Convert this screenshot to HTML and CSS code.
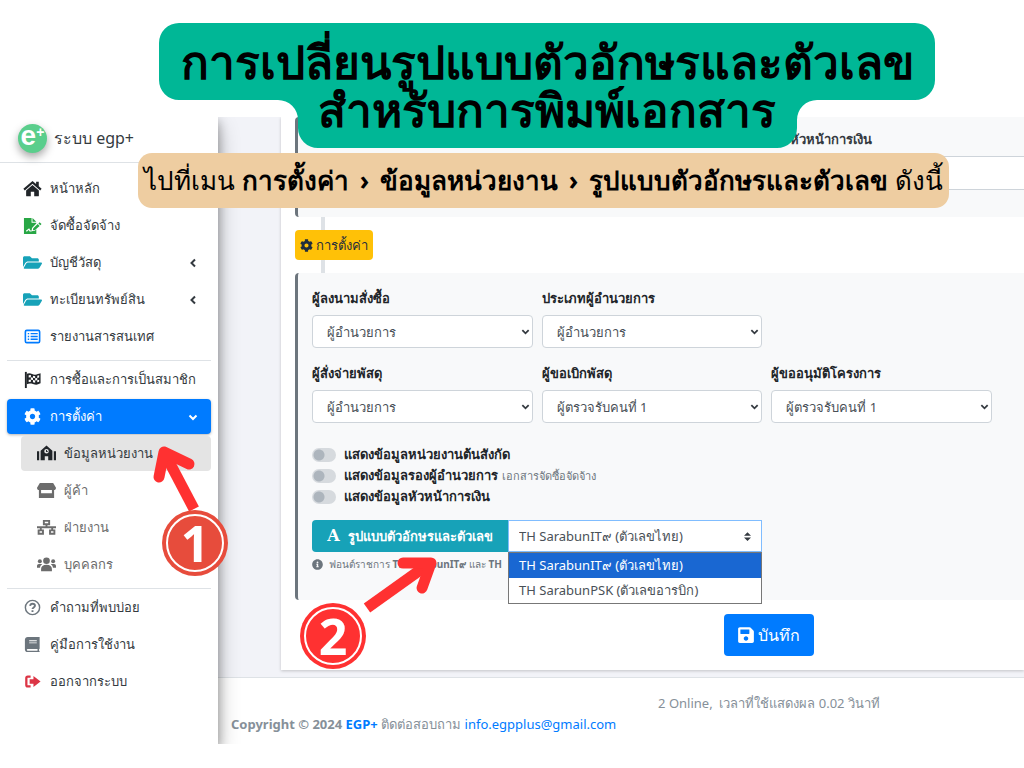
FILE: index.html
```html
<!DOCTYPE html>
<html lang="th">
<head>
  <meta charset="UTF-8" />
  <meta name="viewport" content="width=device-width, initial-scale=1" />
  <title>การเปลี่ยนรูปแบบตัวอักษรและตัวเลข</title>
  <link rel="stylesheet" href="styles.css">
</head>
<body>
  <div class="app">
    <aside class="sidebar">
      <a href="#" class="brand">
        <span class="logo">e<sup>+</sup></span>
        ระบบ egp+
      </a>

      <nav class="menu">
        <a href="#" class="item">
          <svg class="icon dark" viewBox="0 0 20 20"><path d="M10 2 0.400 10.300l1.500 1.700L10 5l8.100 7 1.500-1.700-3-2.600V3h-2.800v2.300z"/><path d="M10 6.400 3.300 12.200v5.300c0 .4.300.7.700.7h4.200v-4.900h3.600v4.900H16c.4 0 .7-.3.700-.7v-5.300z"/></svg>
          <span>หน้าหลัก</span>
        </a>
        <a href="#" class="item">
          <svg class="icon green" viewBox="0 0 20 20"><path fill-rule="evenodd" d="M1 2h8v5h5v1l-4.500 4.500-.5 3.500 3.500-.5L14 14v5H1zM3 15.500l1 1 2-1.800 1 1.500h2v-1H7.800L6.500 13z"/><path d="M10 2l4 4h-4zM17.500 6.500l2 2-1.300 1.300-2-2zM15.500 8.500l2 2-4.800 4.300-2.200.2.300-2z"/></svg>
          <span>จัดซื้อจัดจ้าง</span>
        </a>
        <a href="#" class="item">
          <svg class="icon teal" viewBox="0 0 576 512"><path d="M572.694 292.093L500.270 416.248A63.997 63.997 0 0 1 444.989 448H45.025c-18.523 0-30.064-20.093-20.731-36.093l72.424-124.155A64 64 0 0 1 152 256h399.964c18.523 0 30.064 20.093 20.730 36.093zM152 224h328v-48c0-26.510-21.490-48-48-48H272l-64-64H48C21.490 64 0 85.490 0 112v278.046l69.077-118.418C86.214 242.250 117.989 224 152 224z"/></svg>
          <span>บัญชีวัสดุ</span>
          <svg class="caret" viewBox="0 0 10 10"><path d="M7 1.500 3.500 5 7 8.500"/></svg>
        </a>
        <a href="#" class="item">
          <svg class="icon teal" viewBox="0 0 576 512"><path d="M572.694 292.093L500.270 416.248A63.997 63.997 0 0 1 444.989 448H45.025c-18.523 0-30.064-20.093-20.731-36.093l72.424-124.155A64 64 0 0 1 152 256h399.964c18.523 0 30.064 20.093 20.730 36.093zM152 224h328v-48c0-26.510-21.490-48-48-48H272l-64-64H48C21.490 64 0 85.490 0 112v278.046l69.077-118.418C86.214 242.250 117.989 224 152 224z"/></svg>
          <span>ทะเบียนทรัพย์สิน</span>
          <svg class="caret" viewBox="0 0 10 10"><path d="M7 1.500 3.500 5 7 8.500"/></svg>
        </a>
        <a href="#" class="item">
          <svg class="icon blue" viewBox="0 0 20 20"><rect x="2.500" y="3.500" width="15" height="13" rx="1.500" fill="none" stroke="currentColor" stroke-width="1.700"/><path d="M5 6.200h1.500v1.500H5zM8 6.200h7.500v1.500H8zM5 9.200h1.500v1.500H5zM8 9.200h7.500v1.500H8zM5 12.200h1.500v1.500H5zM8 12.200h7.500v1.500H8z"/></svg>
          <span>รายงานสารสนเทศ</span>
        </a>

        <hr>

        <a href="#" class="item">
          <svg class="icon dark" viewBox="0 0 20 20"><path d="M2 2h2v17H2z"/><path fill-rule="evenodd" d="M4 4c4-2 6 1.500 9 1 2-.3 3-1 5.500-1.500V14c-4 2-5 1.500-8 .7C8 14 6 14 4 15zM6 5.500v2.300l2.300-.3V5.300zM10.500 6v2.200l2.300.4V6.500zM15 6v2.300l2-.5V5.500zM8.300 7.700v2.500l2.200.3V8.200zM12.800 8.600V11l2.200-.3V8.300zM6 10.300v2.400l2.300-.4v-2.100zM10.500 10.500v2.300l2.300.5V11zM15 10.700V13l2-.6v-2.200z"/></svg>
          <span>การซื้อและการเป็นสมาชิก</span>
        </a>
        <a href="#" class="item active">
          <svg class="icon" viewBox="0 0 512 512"><path d="M487.400 315.700l-42.600-24.600c4.300-23.200 4.300-47 0-70.200l42.600-24.600c4.900-2.800 7.100-8.600 5.500-14-11.100-35.600-30-67.800-54.700-94.600-3.800-4.100-10-5.100-14.800-2.300L380.800 110c-17.900-15.400-38.500-27.300-60.800-35.100V25.800c0-5.600-3.900-10.500-9.400-11.700-36.700-8.200-74.300-7.800-109.200 0-5.500 1.200-9.400 6.100-9.400 11.700V75c-22.200 7.900-42.800 19.800-60.800 35.100L88.700 85.500c-4.900-2.800-11-1.900-14.800 2.300-24.700 26.700-43.600 58.900-54.700 94.600-1.700 5.400.6 11.200 5.500 14L67.300 221c-4.300 23.200-4.300 47 0 70.200l-42.600 24.600c-4.900 2.800-7.100 8.600-5.500 14 11.100 35.600 30 67.800 54.700 94.600 3.800 4.100 10 5.100 14.800 2.300l42.600-24.600c17.900 15.400 38.500 27.300 60.800 35.100v49.200c0 5.600 3.900 10.500 9.400 11.700 36.700 8.200 74.300 7.800 109.200 0 5.500-1.200 9.400-6.100 9.400-11.700v-49.200c22.200-7.900 42.800-19.800 60.800-35.100l42.600 24.600c4.900 2.800 11 1.900 14.800-2.300 24.700-26.700 43.600-58.900 54.700-94.600 1.500-5.500-.7-11.300-5.600-14.100zM256 336c-44.100 0-80-35.900-80-80s35.900-80 80-80 80 35.900 80 80-35.900 80-80 80z"/></svg>
          <span>การตั้งค่า</span>
          <svg class="caret" viewBox="0 0 10 10"><path d="M1.500 3.500 5 7l3.500-3.500"/></svg>
        </a>
        <div class="submenu">
          <a href="#" class="item current">
            <svg class="icon dark" viewBox="0 0 20 20"><path d="M0 7.500h2.300V17H0zM17.700 7.500H20V17h-2.300z"/><path fill-rule="evenodd" d="M3.800 17V7L10 1.500 16.200 7v10h-4.400v-4H8.200v4zM10 5.300a2.400 2.400 0 1 0 0 4.800 2.400 2.400 0 0 0 0-4.800zM9.500 6.200h1v1.300h1v1h-2z"/></svg>
            <span>ข้อมูลหน่วยงาน</span>
          </a>
          <a href="#" class="item">
            <svg class="icon" viewBox="0 0 20 20"><path fill-rule="evenodd" d="M3 2h14l3 5c0 1.500-1 2.500-2 2.500V18H2V9.500C1 9.500 0 8.500 0 7zM4.300 9.500V13h11.400V9.500z"/></svg>
            <span>ผู้ค้า</span>
          </a>
          <a href="#" class="item">
            <svg class="icon" viewBox="0 0 20 20"><g fill="none" stroke="currentColor" stroke-width="2"><path d="M7.200 3h5.600v3.500H7.200zM1.700 13h4.600v3.500H1.700zM13.700 13h4.600v3.500h-4.600zM10 6.500v3.300M4 13V9.800M16 13V9.800M0 9.800h20"/></g></svg>
            <span>ฝ่ายงาน</span>
          </a>
          <a href="#" class="item">
            <svg class="icon" viewBox="0 0 20 20"><circle cx="10" cy="6" r="3.500"/><circle cx="3" cy="6.500" r="2.100"/><circle cx="17" cy="6.500" r="2.100"/><path d="M4.300 17v-2.300c0-2.500 2-4.400 5.700-4.400s5.700 1.900 5.700 4.400V17zM0 13.300v-1.700c0-1.300.9-2.100 2-2.100h2.300c.5 0 .8.200 1 .4-1.300.7-2 1.900-2.100 3.400zM20 13.300v-1.700c0-1.300-.9-2.100-2-2.100h-2.300c-.5 0-.8.200-1 .4 1.300.7 2 1.900 2.100 3.400z"/></svg>
            <span>บุคคลกร</span>
          </a>
        </div>

        <hr>

        <a href="#" class="item">
          <svg class="icon gray" viewBox="0 0 20 20"><g fill="none" stroke="currentColor"><circle cx="10" cy="10" r="7.500" stroke-width="1.500"/><path stroke-width="2" d="M7.500 8.200c.2-1.500 1.100-2.200 2.500-2.200 1.500 0 2.600.9 2.600 2.200 0 1.700-2.600 1.800-2.600 3.500M10 12.800v2"/></g></svg>
          <span>คำถามที่พบบ่อย</span>
        </a>
        <a href="#" class="item">
          <svg class="icon gray" viewBox="0 0 20 20"><path fill-rule="evenodd" d="M5 2h12.500v12.500l-.6.5v1.500l.6.500v1H5c-1.700 0-3-1.200-3-2.800V5c0-1.700 1.300-3 3-3zM6.500 5.500v1h8v-1zM6.500 7.800v1h8v-1zM5 14.800c-1.300 0-1.300 1.800 0 1.800h10.300v-1.800z"/></svg>
          <span>คู่มือการใช้งาน</span>
        </a>
        <a href="#" class="item">
          <svg class="icon red" viewBox="0 0 20 20"><path d="M8 4.800H5A1.500 1.500 0 0 0 3.500 6.300v7.400A1.500 1.500 0 0 0 5 15.200h3" fill="none" stroke="currentColor" stroke-width="2.400"/><path d="M7 7.700h4V4.300l7.500 5.700-7.500 5.700v-3.400H7z"/></svg>
          <span>ออกจากระบบ</span>
        </a>
      </nav>
    </aside>

    <div class="main">
      <div class="content">
        <form class="card">
          <section class="panel panel-top">
            <label for="finance">หัวหน้าการเงิน</label>
            <input type="text" id="finance" name="finance">
          </section>

          <div class="step">
            <button type="button" class="step-btn">
              <svg viewBox="0 0 512 512"><path d="M487.400 315.700l-42.600-24.600c4.300-23.200 4.300-47 0-70.200l42.600-24.600c4.900-2.800 7.100-8.600 5.500-14-11.100-35.600-30-67.800-54.700-94.600-3.800-4.100-10-5.100-14.800-2.300L380.800 110c-17.900-15.400-38.500-27.300-60.800-35.100V25.800c0-5.600-3.900-10.500-9.400-11.700-36.700-8.200-74.300-7.800-109.200 0-5.500 1.200-9.400 6.100-9.400 11.700V75c-22.200 7.900-42.800 19.800-60.800 35.100L88.700 85.500c-4.900-2.800-11-1.900-14.800 2.300-24.700 26.700-43.600 58.900-54.700 94.600-1.700 5.400.6 11.200 5.500 14L67.300 221c-4.300 23.200-4.300 47 0 70.200l-42.600 24.600c-4.900 2.800-7.100 8.600-5.500 14 11.100 35.600 30 67.800 54.700 94.600 3.800 4.100 10 5.100 14.800 2.300l42.600-24.600c17.900 15.400 38.500 27.300 60.800 35.100v49.200c0 5.600 3.900 10.500 9.400 11.700 36.700 8.200 74.300 7.800 109.200 0 5.500-1.200 9.400-6.100 9.400-11.700v-49.200c22.200-7.900 42.800-19.800 60.800-35.100l42.600 24.600c4.900 2.800 11 1.900 14.800-2.300 24.700-26.700 43.600-58.900 54.700-94.600 1.500-5.500-.7-11.300-5.600-14.100zM256 336c-44.100 0-80-35.900-80-80s35.900-80 80-80 80 35.900 80 80-35.900 80-80 80z"/></svg>
              <span>การตั้งค่า</span>
            </button>
          </div>

          <section class="panel">
            <div class="fields">
              <div class="field">
                <label for="signer">ผู้ลงนามสั่งซื้อ</label>
                <div class="select">
                  <select id="signer"><option>ผู้อำนวยการ</option></select>
                  <svg viewBox="0 0 10 10"><path d="M1.500 3.500 5 7l3.500-3.500"/></svg>
                </div>
              </div>
              <div class="field">
                <label for="type">ประเภทผู้อำนวยการ</label>
                <div class="select">
                  <select id="type"><option>ผู้อำนวยการ</option></select>
                  <svg viewBox="0 0 10 10"><path d="M1.500 3.500 5 7l3.500-3.500"/></svg>
                </div>
              </div>
              <div class="field first">
                <label for="payer">ผู้สั่งจ่ายพัสดุ</label>
                <div class="select">
                  <select id="payer"><option>ผู้อำนวยการ</option></select>
                  <svg viewBox="0 0 10 10"><path d="M1.500 3.500 5 7l3.500-3.500"/></svg>
                </div>
              </div>
              <div class="field">
                <label for="requester">ผู้ขอเบิกพัสดุ</label>
                <div class="select">
                  <select id="requester"><option>ผู้ตรวจรับคนที่ 1</option></select>
                  <svg viewBox="0 0 10 10"><path d="M1.500 3.500 5 7l3.500-3.500"/></svg>
                </div>
              </div>
              <div class="field">
                <label for="approver">ผู้ขออนุมัติโครงการ</label>
                <div class="select">
                  <select id="approver"><option>ผู้ตรวจรับคนที่ 1</option></select>
                  <svg viewBox="0 0 10 10"><path d="M1.500 3.500 5 7l3.500-3.500"/></svg>
                </div>
              </div>
            </div>

            <div class="switches">
              <label><input type="checkbox"> แสดงข้อมูลหน่วยงานต้นสังกัด</label>
              <label><input type="checkbox"> แสดงข้อมูลรองผู้อำนวยการ <small>เอกสารจัดซื้อจัดจ้าง</small></label>
              <label><input type="checkbox"> แสดงข้อมูลหัวหน้าการเงิน</label>
            </div>

            <div class="font-group">
              <label for="font"><span class="font-icon">A</span> รูปแบบตัวอักษรและตัวเลข</label>
              <div class="font-select">
                <select id="font">
                  <option>TH SarabunIT๙ (ตัวเลขไทย)</option>
                  <option>TH SarabunPSK (ตัวเลขอารบิก)</option>
                </select>
                <svg viewBox="0 0 8 10"><path d="M4 0l4 4H0zM4 10l4-4H0z"/></svg>
                <ul class="options">
                  <li class="selected">TH SarabunIT๙ (ตัวเลขไทย)</li>
                  <li>TH SarabunPSK (ตัวเลขอารบิก)</li>
                </ul>
              </div>
            </div>
            <p class="hint">
              <svg viewBox="0 0 512 512"><path d="M256 8C119.043 8 8 119.083 8 256c0 136.997 111.043 248 248 248s248-111.003 248-248C504 119.083 392.957 8 256 8zm0 110c23.196 0 42 18.804 42 42s-18.804 42-42 42-42-18.804-42-42 18.804-42 42-42zm56 254c0 6.627-5.373 12-12 12h-88c-6.627 0-12-5.373-12-12v-24c0-6.627 5.373-12 12-12h12v-64h-12c-6.627 0-12-5.373-12-12v-24c0-6.627 5.373-12 12-12h64c6.627 0 12 5.373 12 12v100h12c6.627 0 12 5.373 12 12v24z"/></svg>
              <span>ฟอนต์ราชการ <b>TH SarabunIT๙</b> และ <b>TH</b></span>
            </p>
          </section>

          <div class="actions">
            <button type="submit" class="save">
              <svg viewBox="0 0 448 512"><path d="M433.941 129.941l-83.882-83.882A48 48 0 0 0 316.118 32H48C21.490 32 0 53.490 0 80v352c0 26.510 21.490 48 48 48h352c26.510 0 48-21.490 48-48V163.882a48 48 0 0 0-14.059-33.941zM224 416c-35.346 0-64-28.654-64-64 0-35.346 28.654-64 64-64s64 28.654 64 64c0 35.346-28.654 64-64 64zm96-304.520V212c0 6.627-5.373 12-12 12H76c-6.627 0-12-5.373-12-12V108c0-6.627 5.373-12 12-12h228.520c3.183 0 6.235 1.264 8.485 3.515l3.480 3.480A11.996 11.996 0 0 1 320 111.480z"/></svg>
              <span>บันทึก</span>
            </button>
          </div>
        </form>
      </div>

      <footer>
        <p class="online">2 Online, &nbsp;เวลาที่ใช้แสดงผล 0.02 วินาที</p>
        <p><b>Copyright © 2024 <a href="#">EGP+</a></b> ติดต่อสอบถาม <a href="#">info.egpplus@gmail.com</a></p>
      </footer>
    </div>
  </div>

  <h1 class="title">
    <svg viewBox="0 0 776 126"><path d="M20 0H756a20 20 0 0 1 20 20V57a20 20 0 0 1-20 20H658a20 20 0 0 0-20 20V105a20 20 0 0 1-20 20H159a20 20 0 0 1-20-20V97a20 20 0 0 0-20-20H20a20 20 0 0 1-20-20V20A20 20 0 0 1 20 0z"/></svg>
    <span>การเปลี่ยนรูปแบบตัวอักษรและตัวเลข</span>
    <span>สำหรับการพิมพ์เอกสาร</span>
  </h1>
  <p class="path">ไปที่เมน <b>การตั้งค่า <span class="sep">›</span> ข้อมูลหน่วยงาน <span class="sep">›</span> รูปแบบตัวอักษรและตัวเลข</b> ดังนี้</p>

  <!-- step arrows -->
  <svg class="arrow arrow-one" viewBox="0 0 50 72"><path d="M14 11 44 68"/><path class="head" d="M9 36l5-25 25 12"/></svg>
  <span class="badge badge-one">1</span>
  <svg class="arrow arrow-two" viewBox="0 0 84 64"><path d="M7 54 70 9"/><path class="head" d="M43 9h28l-9 25"/></svg>
  <span class="badge badge-two">2</span>
</body>
</html>
```

FILE: styles.css
```css
* {
  box-sizing: border-box;
}

body {
  margin: 0;
  padding: 117px 0 24px;
  position: relative;
  background: #fff;
  color: #343a40;
  font-family: 'Noto Sans', 'Open Sans', sans-serif;
  font-size: 13px;
}

a {
  color: #007bff;
  text-decoration: none;
}

p {
  margin: 0;
}

button, input, select {
  font: inherit;
  color: inherit;
}

.app {
  display: flex;
  overflow: hidden;
}

/* sidebar */
.sidebar {
  width: 218px;
  flex-shrink: 0;
  position: relative;
  z-index: 1;
  background: #fff;
  box-shadow: 0 10px 20px rgba(0,0,0,0.3), 0 4px 10px rgba(0,0,0,0.3);
}

.brand {
  display: flex;
  align-items: center;
  gap: 7px;
  height: 46px;
  padding: 0 0 2px 18px;
  border-bottom: 1px solid #dee2e6;
  color: #343a40;
  font-size: 16px;
}

.logo {
  display: flex;
  justify-content: center;
  width: 29px;
  height: 29px;
  border-radius: 50%;
  background: #5ace8c;
  box-shadow: 0 4px 8px rgba(0,0,0,0.35);
  color: #fff;
  font: bold 28px/24px 'Liberation Sans', sans-serif;
}

.logo sup {
  font-size: 14px;
  line-height: 16px;
}

.menu {
  display: flex;
  flex-direction: column;
  gap: 2px;
  padding: 8px 7px 0;
}

.item {
  display: flex;
  align-items: center;
  gap: 8px;
  height: 35px;
  padding: 0 13px 0 16px;
  border-radius: 4px;
  color: #343a40;
  white-space: nowrap;
}

.icon {
  width: 19px;
  height: 19px;
  flex-shrink: 0;
  fill: currentColor;
}

.dark { color: #212529; }
.green { color: #28a745; }
.teal { color: #17a2b8; }
.blue { color: #007bff; }
.gray { color: #6c757d; }
.red { color: #dc3545; }

.caret {
  width: 10px;
  height: 10px;
  margin-left: auto;
  fill: none;
  stroke: currentColor;
  stroke-width: 2;
}

.menu hr {
  width: 100%;
  margin: 4px 0 -1px;
  border: 0;
  border-top: 1px solid #dee2e6;
}

.item.active {
  background: #007bff;
  box-shadow: 0 1px 3px rgba(0,0,0,0.3);
  color: #fff;
}

.active .icon {
  width: 17px;
  margin: 0 1px;
}

.submenu {
  display: flex;
  flex-direction: column;
  gap: 2px;
  padding-left: 14px;
}

.submenu .item {
  color: #6c6c6c;
}

.submenu .item.current {
  background: #e4e4e4;
  color: #343a40;
}

/* content */
.main {
  flex: 1;
  min-width: 0;
}

.content {
  padding: 0 0 7px 63px;
  background: #f2f3f8;
  border-bottom: 1px solid #dee2e6;
}

.card {
  padding-left: 14px;
  background: #fff;
  box-shadow: 0 1px 3px rgba(0,0,0,0.2);
}

.panel {
  padding: 14px 32px 24px 14px;
  border-left: 3px solid #6c757d;
  border-radius: 4px 0 0 4px;
  background: #f8f9fa;
}

.panel-top {
  height: 100px;
  padding: 11px 0 0 492px;
}

.panel-top label {
  display: block;
  height: 28px;
  line-height: 22px;
  font-weight: bold;
}

.panel-top input {
  width: 100%;
  height: 34px;
  border: 1px solid #ced4da;
  border-right: 0;
}

.step {
  padding: 13px 0;
  background: linear-gradient(#dee2e6, #dee2e6) 26px 0 / 4px 100% no-repeat;
}

.step-btn {
  display: flex;
  align-items: center;
  gap: 3px;
  height: 30px;
  padding: 0 5px;
  border: 0;
  border-radius: 4px;
  background: #ffc107;
  color: #1f2d3d;
}

.step-btn svg {
  width: 13px;
  height: 13px;
  fill: currentColor;
}

.fields {
  display: grid;
  grid-template-columns: repeat(3, 1fr);
  gap: 14px 9px;
}

.field.first {
  grid-column: 1;
}

.field label {
  display: block;
  height: 28px;
  line-height: 22px;
  font-weight: bold;
  color: #212529;
}

.select, .font-select {
  position: relative;
}

.select select {
  display: block;
  width: 100%;
  height: 33px;
  padding: 0 14px;
  border: 1px solid #ced4da;
  border-radius: 4px;
  appearance: none;
  background: #fff;
  color: #495057;
}

.select svg {
  position: absolute;
  right: 3px;
  top: 12px;
  width: 9px;
  height: 9px;
  fill: none;
  stroke: #343a40;
  stroke-width: 2;
}

.switches {
  display: flex;
  flex-direction: column;
  padding: 21px 0 13px;
}

.switches label {
  display: flex;
  align-items: center;
  height: 21px;
  font-weight: bold;
  color: #212529;
}

.switches input {
  width: 24px;
  height: 14px;
  margin: 0 8px 0 0;
  border-radius: 7px;
  appearance: none;
  background: radial-gradient(circle at 7px 7px, #adb5bd 5px, #d6dade 6px);
}

.switches small {
  margin-left: 4px;
  font-size: 11px;
  font-weight: normal;
  color: #6c757d;
}

.font-group {
  display: grid;
  grid-template-columns: 196px 254px;
}

.font-group label {
  display: flex;
  align-items: center;
  justify-content: center;
  gap: 8px;
  height: 32px;
  border-radius: 4px 0 0 4px;
  background: #17a2b8;
  color: #fff;
  font-weight: bold;
  white-space: nowrap;
}

.font-icon {
  font: bold 16px/20px 'DejaVu Serif', serif;
}

.font-select select {
  display: block;
  width: 100%;
  height: 32px;
  padding: 0 10px;
  border: 1px solid #80bdff;
  appearance: none;
  background: #fff;
  color: #495057;
}

.font-select svg {
  position: absolute;
  right: 11px;
  top: 12px;
  width: 7px;
  height: 9px;
  fill: #343a40;
}

.options {
  position: absolute;
  top: 32px;
  left: 0;
  width: 100%;
  margin: 0;
  padding: 0;
  border: 1px solid #777;
  background: #fff;
  list-style: none;
  color: #495057;
}

.options li {
  height: 25px;
  padding: 0 10px;
  line-height: 25px;
  white-space: nowrap;
}

.options .selected {
  background: #1967d2;
  color: #fff;
}

.hint {
  display: flex;
  align-items: center;
  gap: 6px;
  height: 24px;
  font-size: 10px;
  color: #6c757d;
}

.hint svg {
  width: 11px;
  height: 11px;
  fill: currentColor;
}

.actions {
  display: flex;
  justify-content: center;
  padding: 14px 0 14px 218px;
}

.save {
  display: flex;
  align-items: center;
  gap: 4px;
  height: 42px;
  padding: 0 14px;
  border: 0;
  border-radius: 4px;
  background: #007bff;
  color: #fff;
  font-size: 16px;
}

.save svg {
  width: 16px;
  height: 18px;
  fill: currentColor;
}

footer {
  padding: 15px 0 9px 13px;
  color: #869099;
}

footer p {
  line-height: 21px;
}

.online {
  padding-left: 283px;
  text-align: center;
}

/* banners over the page */
.title {
  position: absolute;
  z-index: 2;
  top: 23px;
  left: 159px;
  width: 776px;
  height: 126px;
  margin: 0;
  padding-top: 14px;
  color: #000;
  font-size: 46px;
  line-height: 48px;
  text-align: center;
  white-space: nowrap;
}

.title svg {
  position: absolute;
  inset: 0;
  fill: #00b796;
}

.title span {
  display: block;
  position: relative;
}

.path {
  position: absolute;
  z-index: 2;
  top: 153px;
  left: 138px;
  width: 811px;
  height: 55px;
  border-radius: 14px;
  background: #eecda1;
  color: #000;
  font-size: 26px;
  line-height: 55px;
  text-align: center;
  white-space: nowrap;
}

.sep {
  margin: 0 4px;
}

.arrow {
  position: absolute;
  z-index: 2;
  fill: none;
  stroke: #ff3131;
  stroke-width: 11;
  stroke-linejoin: round;
}

.arrow .head {
  stroke-linecap: round;
}

.arrow-one {
  top: 441px;
  left: 150px;
  width: 50px;
  height: 72px;
}

.arrow-two {
  top: 554px;
  left: 360px;
  width: 84px;
  height: 64px;
}

.badge {
  position: absolute;
  z-index: 2;
  width: 58px;
  height: 58px;
  border: 2px solid #fff;
  border-radius: 50%;
  color: #fff;
  font: bold 50px/54px 'Open Sans', sans-serif;
  text-align: center;
}

.badge-one {
  top: 514px;
  left: 166px;
  background: #e74c3c;
  box-shadow: 0 0 0 4px #e74c3c;
}

.badge-two {
  top: 607px;
  left: 304px;
  background: #ff3131;
  box-shadow: 0 0 0 4px #ff3131;
}
```
